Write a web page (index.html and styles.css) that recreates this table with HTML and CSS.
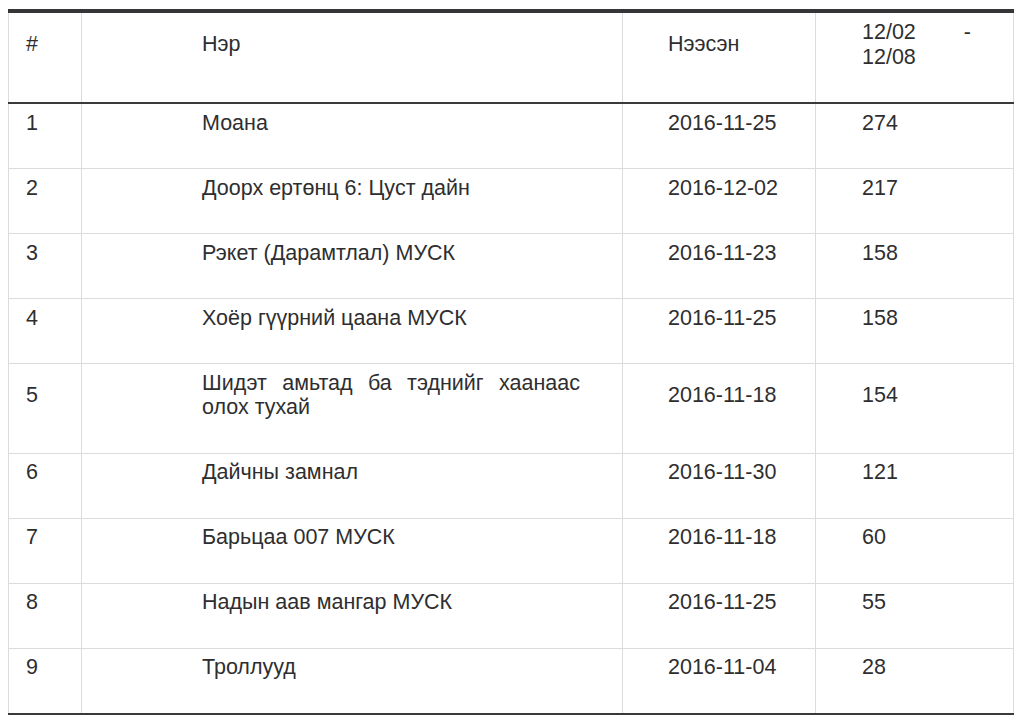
FILE: index.html
```html
<!DOCTYPE html>
<html lang="mn">
<head>
<meta charset="utf-8">
<title>Box office</title>
<link rel="stylesheet" href="styles.css">
</head>
<body>
<table class="chart">
  <colgroup>
    <col class="c-rank">
    <col class="c-name">
    <col class="c-date">
    <col class="c-count">
  </colgroup>
  <thead>
    <tr>
      <th class="rank">#</th>
      <th class="name">Нэр</th>
      <th class="date">Нээсэн</th>
      <th class="count">12/02 - 12/08</th>
    </tr>
  </thead>
  <tbody>
    <tr><td class="rank">1</td><td class="name">Моана</td><td class="date">2016-11-25</td><td class="count">274</td></tr>
    <tr><td class="rank">2</td><td class="name">Доорх ертөнц 6: Цуст дайн</td><td class="date">2016-12-02</td><td class="count">217</td></tr>
    <tr><td class="rank">3</td><td class="name">Рэкет (Дарамтлал) МУСК</td><td class="date">2016-11-23</td><td class="count">158</td></tr>
    <tr><td class="rank">4</td><td class="name">Хоёр гүүрний цаана МУСК</td><td class="date">2016-11-25</td><td class="count">158</td></tr>
    <tr><td class="rank">5</td><td class="name">Шидэт амьтад ба тэднийг хаанаас олох тухай</td><td class="date">2016-11-18</td><td class="count">154</td></tr>
    <tr><td class="rank">6</td><td class="name">Дайчны замнал</td><td class="date">2016-11-30</td><td class="count">121</td></tr>
    <tr><td class="rank">7</td><td class="name">Барьцаа 007 МУСК</td><td class="date">2016-11-18</td><td class="count">60</td></tr>
    <tr><td class="rank">8</td><td class="name">Надын аав мангар МУСК</td><td class="date">2016-11-25</td><td class="count">55</td></tr>
    <tr><td class="rank">9</td><td class="name">Троллууд</td><td class="date">2016-11-04</td><td class="count">28</td></tr>
  </tbody>
</table>
</body>
</html>
```
FILE: styles.css
```css
html, body {
  background: #ffffff;
}
body {
  margin: 9px 8px 8px 8px;
  font-family: "Liberation Sans", Arial, sans-serif;
  font-size: 21.5px;
  line-height: 24.5px;
  color: #2e2e30;
}
.chart {
  width: 1005px;
  table-layout: fixed;
  border-collapse: collapse;
  border-top: 4px solid #363638;
  border-left: 1px solid #dcdcdc;
  border-right: 1px solid #dcdcdc;
  border-bottom: 2px solid #3a3a3c;
}
.c-rank { width: 73px; }
.c-name { width: 541px; }
.c-date { width: 193px; }
.c-count { width: 198px; }

.chart th,
.chart td {
  font-weight: normal;
  text-align: justify;
  vertical-align: middle;
  padding: 6.5px 20px 33px 46px;
  border-left: 1px solid #dcdcdc;
  border-right: 1px solid #dcdcdc;
}
.chart th {
  padding-top: 7px;
}
.chart thead tr {
  border-bottom: 2px solid #3a3a3c;
}
.chart tbody tr + tr {
  border-top: 1px solid #dcdcdc;
}
.chart .rank {
  padding-left: 17px;
  padding-right: 10px;
}
.chart .name {
  padding-left: 120px;
  padding-right: 42px;
}
.chart .date {
  padding-left: 45px;
  padding-right: 10px;
}
.chart .count {
  padding-left: 46px;
  padding-right: 42px;
}
```
